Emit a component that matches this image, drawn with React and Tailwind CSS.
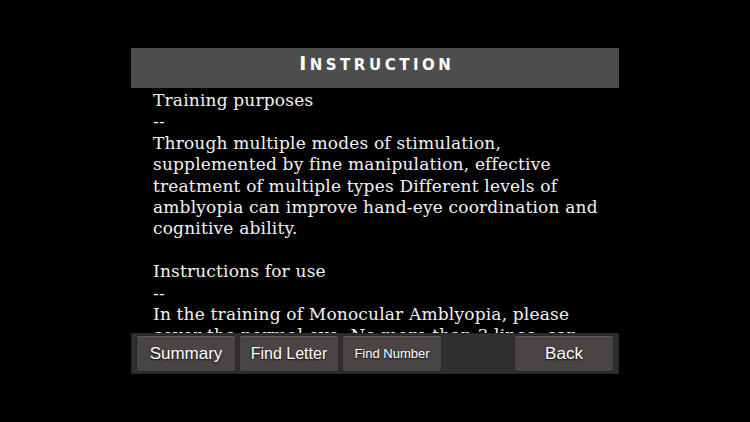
const bodyFont = { fontFamily: '"DejaVu Serif", serif' };

const purposeLines = [
  "Through multiple modes of stimulation,",
  "supplemented by fine manipulation, effective",
  "treatment of multiple types Different levels of",
  "amblyopia can improve hand-eye coordination and",
  "cognitive ability.",
];

const useLines = [
  "In the training of Monocular Amblyopia, please",
  "cover the normal eye; No more than 3 lines, can",
];

function NavButton({ children, className = "" }) {
  return (
    <button
      className={`flex h-[37px] w-[100px] items-center justify-center rounded-[2px] border border-[#2a2727] bg-[#4a4545] font-['Liberation_Sans',sans-serif] text-white shadow-[inset_0_1px_0_rgba(255,255,255,0.12)] [text-shadow:0_1px_2px_rgba(0,0,0,0.9)] ${className}`}
    >
      {children}
    </button>
  );
}

export default function App() {
  return (
    <div className="flex h-[422px] w-[750px] justify-center overflow-hidden bg-black pt-[48px]">
      <div className="flex w-[488px] flex-col">
        <div className="flex h-[40px] items-center justify-center bg-[#4d4d4d] pb-[10px]">
          <h1 className="pl-[0.22em] font-['DejaVu_Sans',sans-serif] font-bold uppercase leading-none tracking-[0.22em] text-white">
            <span className="text-[19px]">I</span>
            <span className="text-[15px]">nstruction</span>
          </h1>
        </div>

        <div
          className="h-[245px] overflow-hidden pl-[22px] pt-[2px] text-[17px] leading-[21.4px] tracking-[0.18px] text-[#f2f2f2]"
          style={bodyFont}
        >
          <p className="whitespace-nowrap">Training purposes</p>
          <p>--</p>
          {purposeLines.map((line) => (
            <p key={line} className="whitespace-nowrap">
              {line}
            </p>
          ))}
          <p className="h-[21.4px]" />
          <p className="whitespace-nowrap">Instructions for use</p>
          <p>--</p>
          {useLines.map((line) => (
            <p key={line} className="whitespace-nowrap">
              {line}
            </p>
          ))}
        </div>

        <div className="flex h-[41px] items-center gap-[3px] border border-[#262626] bg-[#2f2f2f] px-[4px]">
          <NavButton className="text-[17px]">Summary</NavButton>
          <NavButton className="text-[16px]">Find Letter</NavButton>
          <NavButton className="text-[13px]">Find Number</NavButton>
          <div className="flex-1" />
          <NavButton className="text-[17px]">Back</NavButton>
        </div>
      </div>
    </div>
  );
}
